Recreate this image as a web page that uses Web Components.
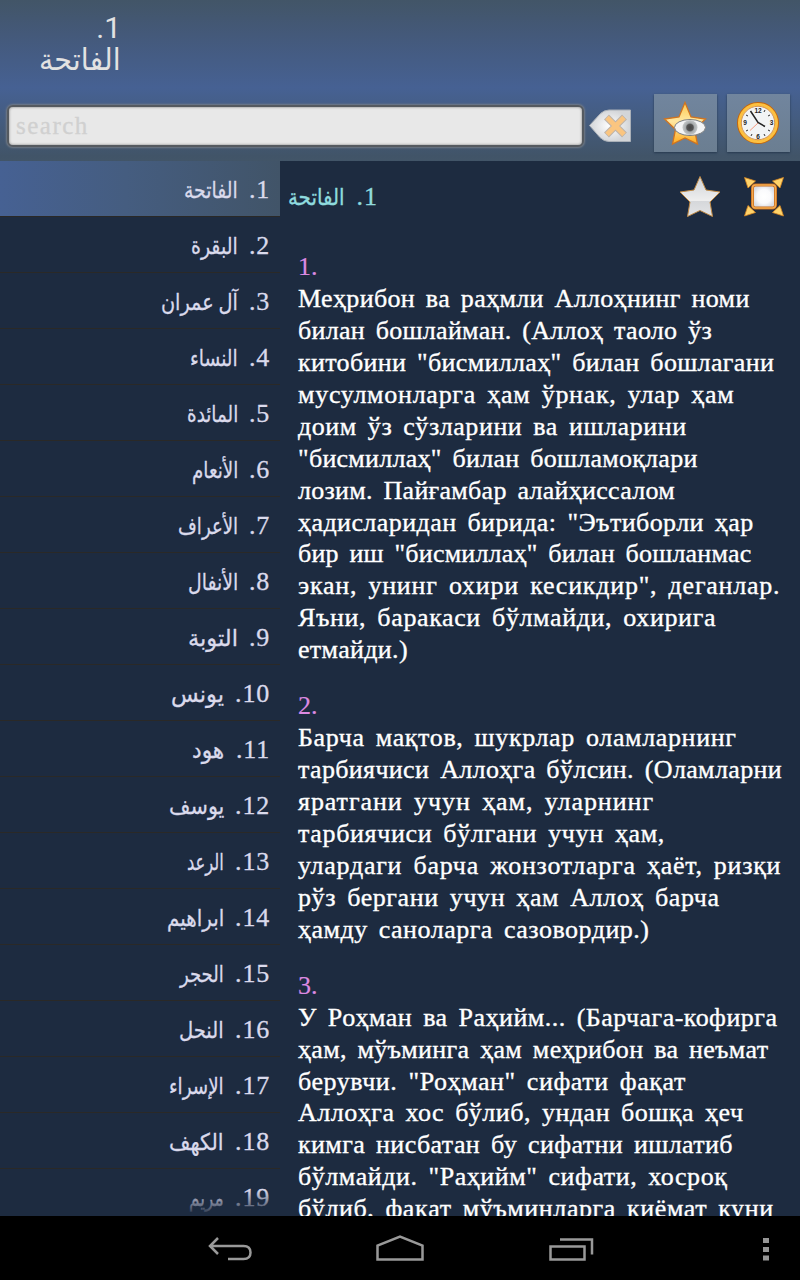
<!DOCTYPE html>
<html lang="uz">
<head>
<meta charset="utf-8">
<title>الفاتحة</title>
<style>
  html, body { margin: 0; height: 100%; overflow: hidden; background: #000; }
</style>
</head>
<body>
<quran-app></quran-app>

<script>
// [title, drawn width]
const CHAPTERS = [
  ['الفاتحة', 54], ['البقرة', 47], ['آل عمران', 77], ['النساء', 48],
  ['المائدة', 51], ['الأنعام', 46], ['الأعراف', 60], ['الأنفال', 50],
  ['التوبة', 50], ['يونس', 53], ['هود', 32], ['يوسف', 55],
  ['الرعد', 37], ['ابراهيم', 57], ['الحجر', 44], ['النحل', 45],
  ['الإسراء', 55], ['الكهف', 55], ['مريم', 35],
];

// Every line is [text, drawn width]
const VERSES = [
  [
    ['Меҳрибон ва раҳмли Аллоҳнинг номи', 452],
    ['билан бошлайман. (Аллоҳ таоло ўз', 414],
    ['китобини "бисмиллаҳ" билан бошлагани', 476],
    ['мусулмонларга ҳам ўрнак, улар ҳам', 437],
    ['доим ўз сўзларини ва ишларини', 389],
    ['"бисмиллаҳ" билан бошламоқлари', 400],
    ['лозим. Пайғамбар алайҳиссалом', 377],
    ['ҳадисларидан бирида: "Эътиборли ҳар', 456],
    ['бир иш "бисмиллаҳ" билан бошланмас', 453],
    ['экан, унинг охири кесикдир", деганлар.', 482],
    ['Яъни, баракаси бўлмайди, охирига', 418],
    ['етмайди.)', 110],
  ],
  [
    ['Барча мақтов, шукрлар оламларнинг', 439],
    ['тарбиячиси Аллоҳга бўлсин. (Оламларни', 484],
    ['яратгани учун ҳам, уларнинг', 356],
    ['тарбиячиси бўлгани учун ҳам,', 367],
    ['улардаги барча жонзотларга ҳаёт, ризқи', 483],
    ['рўз бергани учун ҳам Аллоҳ барча', 422],
    ['ҳамду саноларга сазовордир.)', 351],
  ],
  [
    ['У Роҳман ва Раҳийм... (Барчага-кофирга', 479],
    ['ҳам, мўъминга ҳам меҳрибон ва неъмат', 470],
    ['берувчи. "Роҳман" сифати фақат', 388],
    ['Аллоҳга хос бўлиб, ундан бошқа ҳеч', 445],
    ['кимга нисбатан бу сифатни ишлатиб', 435],
    ['бўлмайди. "Раҳийм" сифати, хосроқ', 429],
    ['бўлиб, фақат мўъминларга қиёмат куни', 476],
  ],
];

// Text that is fitted to the width given in its "width" attribute
class FitText extends HTMLElement {
  connectedCallback() {
    if (!this.shadowRoot) {
      this.attachShadow({ mode: 'open' });
      this.shadowRoot.innerHTML = /* HTML */ `
        <style>
          :host { display: inline-block; white-space: nowrap; }
          span { display: inline-block; transform-origin: 0 50%; }
          :host([arabic]) span { transform-origin: 100% 50%; }
        </style>
        <span><slot></slot></span>
      `;
    }
    this.fit();
  }

  fit() {
    const span = this.shadowRoot.querySelector('span');
    const width = Number(this.getAttribute('width'));
    const natural = span.offsetWidth;
    if (!width || !natural) return;
    if (this.hasAttribute('arabic')) {
      // Joined letters can't be spaced, so squeeze the word instead
      span.style.transform = `scaleX(${width / natural})`;
      return;
    }
    const count = this.textContent.length;
    span.style.letterSpacing = `${(width - natural) / count}px`;
  }
}

class AppHeader extends HTMLElement {
  constructor() {
    super();
    this.attachShadow({ mode: 'open' });
    this.shadowRoot.innerHTML = /* HTML */ `
      <style>
        :host {
          display: flex;
          flex-direction: column;
          box-sizing: border-box;
          height: 161px;
          background: linear-gradient(#425567 0, #44597a 35px, #466193 88px, #445c7f 120px, #415468 156px, #425568 161px);
        }
        .title {
          flex: none;
          width: 82px;
          height: 69px;
          padding: 12px 0 0 39px;
          direction: rtl;
          font: 30px/32px Roboto, "DejaVu Sans", sans-serif;
          color: #e2e2e2;
        }
        .bar { display: flex; flex: none; height: 60px; padding-top: 12px; align-items: flex-start; }
        .search {
          box-sizing: border-box;
          width: 577px;
          height: 42px;
          margin: 12px 4px 0 7px;
          padding: 0 7px;
          border: 2px solid #555a60;
          border-radius: 6px;
          background: #e8e8e8;
          box-shadow: inset 0 0 2px 1px #b5b5b5, 0 0 2px 1px #737b86;
          font: 25px/38px "Liberation Serif", serif;
          -webkit-text-stroke: .3px #d0d0d0;
          color: #d0d0d0;
        }
        .clear { margin-top: 15px; flex: none; }
        button {
          flex: none;
          width: 63px;
          height: 58px;
          margin: 1px 0 0 10px;
          padding: 0;
          border: 0;
          background: linear-gradient(#71859e, #6b7e91);
          box-shadow: 0 1px 2px #26384e;
        }
        button.first { margin-left: 22px; }
        svg { display: block; }
      </style>
      <div class="title"><div>1.</div><fit-text arabic width="82">الفاتحة</fit-text></div>
      <div class="bar">
        <div class="search"><fit-text width="73">search</fit-text></div>
        <svg class="clear" width="44" height="36" viewBox="0 0 44 36">
          <defs><radialGradient id="g"><stop offset="0" stop-color="#fff"/><stop offset="1" stop-color="#d3d5d8"/></radialGradient></defs>
          <path d="M1.500 17.500L12 6q4-4 9-4h21.500v31.500H21q-5 0-9-4z" fill="url(#g)" stroke="#aab0b8"/>
          <path d="M18.500 9L36.500 27M36.500 9L18.500 27" stroke="#bcb3ab" stroke-width="7"/>
          <path d="M19 9.500L36 26.500M36 9.500L19 26.500" stroke="#fac580" stroke-width="5"/>
        </svg>
        <button class="first">
          <svg width="63" height="58" viewBox="0 0 63 58">
            <defs><linearGradient id="s" x2="0" y2="1"><stop offset="0" stop-color="#ffc84e"/><stop offset=".45" stop-color="#ffe7a0"/><stop offset="1" stop-color="#ffad20"/></linearGradient>
            <radialGradient id="e"><stop offset="0" stop-color="#444"/><stop offset=".43" stop-color="#555"/><stop offset=".6" stop-color="#a6aaac"/><stop offset="1" stop-color="#c6c9ca"/></radialGradient></defs>
            <path d="M31 8.500l6 14.500 14.500 2-11 10.500 3 14.500-12.500-6-12.500 6 3-14.500-11-10.500 14.500-2z" fill="url(#s)" stroke="#cf7420" stroke-width="1.300"/>
            <ellipse cx="36" cy="33.500" rx="15.500" ry="8" fill="#f3f4f5" stroke="#7c7e80"/>
            <circle cx="36" cy="33.500" r="7.500" fill="url(#e)"/>
          </svg>
        </button>
        <button>
          <svg width="63" height="58" viewBox="0 0 63 58">
            <circle cx="31" cy="29" r="20" fill="#fff" stroke="#c76608" stroke-width="2"/>
            <circle cx="31" cy="29" r="18.500" fill="#f2f4f5" stroke="#fcc040" stroke-width="3"/>
            <circle cx="31" cy="29" r="16.700" fill="none" stroke="#c66b13" stroke-width=".7"/>
            <g font-family="Liberation Sans, sans-serif" font-size="6.500" font-weight="bold" fill="#222" text-anchor="middle">
              <text x="31" y="18.500">12</text><text x="44.500" y="31">3</text><text x="31" y="45">6</text><text x="18" y="31">9</text>
            </g>
            <path d="M38 16l-1 2M43 21l-2 1M43 37l-2-1M38 42l-1-2M24 42l1-2M19 37l2-1M19 21l2 1" stroke="#333"/>
            <path d="M31 29l-8 7.500" stroke="#f69a80"/>
            <path d="M23.500 17L31 28.500l7 4" fill="none" stroke="#222" stroke-width="1.500"/>
          </svg>
        </button>
      </div>
    `;
  }
}

class ChapterItem extends HTMLElement {
  connectedCallback() {
    this.attachShadow({ mode: 'open' });
    this.shadowRoot.innerHTML = /* HTML */ `
      <style>
        :host {
          display: block;
          box-sizing: border-box;
          height: 56px;
          padding: 1px 10px 0 0;
          direction: rtl;
          border-bottom: 1px solid #2a2927;
          font: 26px/56px "Liberation Serif", "DejaVu Sans", serif;
          -webkit-text-stroke: .3px #dadaec;
          color: #dadaec;
        }
        :host([selected]) { background: linear-gradient(90deg, #466193, #455d80 45%, #415468); }
        .num { display: inline-block; letter-spacing: .8px; width: 32px; }
        .num.wide { width: 46px; }
        fit-text { font-size: 23px; }
      </style>
      <span class="num ${this.getAttribute('num') > 9 ? 'wide' : ''}">${this.getAttribute('num')}. </span><fit-text
        arabic width="${this.getAttribute('width')}">${this.textContent}</fit-text>
    `;
  }
}

class ChapterList extends HTMLElement {
  connectedCallback() {
    this.attachShadow({ mode: 'open' });
    const items = CHAPTERS.map(
      ([name, width], i) =>
        `<chapter-item num="${i + 1}" width="${width}" ${i ? '' : 'selected'}>${name}</chapter-item>`
    );
    this.shadowRoot.innerHTML = /* HTML */ `
      <style>
        :host { display: block; position: relative; overflow: hidden; }
        /* Fades the last row out */
        .fade {
          position: absolute;
          inset: auto 0 0 0;
          height: 26px;
          background: linear-gradient(transparent, #1d2b40);
        }
      </style>
      ${items.join('')}
      <div class="fade"></div>
    `;
  }
}

class ReaderPane extends HTMLElement {
  connectedCallback() {
    this.attachShadow({ mode: 'open' });
    const verses = VERSES.map(
      (lines, i) => `<section><div class="num">${i + 1}.</div>${lines
        .map(([text, width]) => `<div><fit-text width="${width}">${text}</fit-text></div>`)
        .join('')}</section>`
    );
    this.shadowRoot.innerHTML = /* HTML */ `
      <style>
        :host {
          display: block;
          overflow: hidden;
          font: 26px/31.950px "Liberation Serif", serif;
          -webkit-text-stroke: .35px currentColor;
          color: #fff;
        }
        header { display: flex; align-items: center; height: 72px; padding: 0 15px 0 7px; }
        h1 {
          direction: rtl;
          margin: 0 auto 0 0;
          width: 91px;
          white-space: nowrap;
          font: 26px/32px "Liberation Serif", "DejaVu Sans", serif;
          color: #8fdbdf;
        }
        h1 span { display: inline-block; width: 33px; letter-spacing: 1px; }
        h1 fit-text { font-size: 23px; }
        .star { margin-right: 21px; }
        .verses { padding: 18px 0 0 18px; }
        .verses fit-text { word-spacing: 4px; }
        section { margin-bottom: 24px; }
        section div { height: 31.950px; }
        .num { color: #dc8ae2; -webkit-text-stroke: .2px #dc8ae2; }
      </style>
      <header>
        <h1><span>1. </span><fit-text arabic width="57">الفاتحة</fit-text></h1>
        <svg class="star" width="44" height="44" viewBox="0 0 44 44">
          <defs><linearGradient id="w" x2="0" y2="1"><stop offset="0" stop-color="#cfd2d6"/><stop offset=".6" stop-color="#eee"/><stop offset=".61" stop-color="#d5d7da"/><stop offset="1" stop-color="#e4e5e7"/></linearGradient></defs>
          <path d="M22 1.500l6 13.500 14 2-10 10 2.500 14.500-12.500-6-12.500 6L12 27 2 17l14-2z" fill="url(#w)" stroke="#c08a45"/>
        </svg>
        <svg width="42" height="42" viewBox="0 0 42 42">
          <defs><radialGradient id="f"><stop offset="0" stop-color="#fff"/><stop offset=".6" stop-color="#fafafc"/><stop offset="1" stop-color="#d9dce3"/></radialGradient></defs>
          <g fill="#ffd36a" stroke="#d48420" stroke-width=".8">
            <path d="M1.500 1.500l11 3.500-7.500 7zM40.500 1.500l-11 3.500 7.500 7zM1.500 40l11-3.500-7.500-7zM40.500 40l-11-3.500 7.500-7z"/>
          </g>
          <rect x="9.500" y="9" width="23" height="23" rx="3" fill="url(#f)" stroke="#c66d20" stroke-width="3"/>
          <rect x="9.500" y="9" width="23" height="23" rx="3" fill="none" stroke="#f5aa4e" stroke-width="1.500"/>
        </svg>
      </header>
      <div class="verses">${verses.join('')}</div>
    `;
  }
}

class SystemBar extends HTMLElement {
  constructor() {
    super();
    this.attachShadow({ mode: 'open' });
    this.shadowRoot.innerHTML = /* HTML */ `
      <style>
        :host {
          display: flex;
          align-items: center;
          box-sizing: border-box;
          height: 64px;
          padding: 3px 28px 1px 206px;
          background: #000;
        }
        svg { flex: none; fill: none; stroke: #999; stroke-width: 2.500; }
        .home { margin-left: 123px; }
        .recent { margin-left: 123px; }
        .menu { margin-left: auto; fill: #969696; stroke: none; }
      </style>
      <svg width="46" height="30" viewBox="0 0 46 30"><path d="M12 4L4 12l8 8M4 12h33.500q7 0 7 6.500T37.500 25H22"/></svg>
      <svg class="home" width="49" height="30" viewBox="0 0 49 30"><path d="M2.500 25.500V11.500L25 2.500 47.500 11.500v14z"/></svg>
      <svg class="recent" width="48" height="30" viewBox="0 0 48 30"><path d="M3.500 12.500h34v13h-34zM13 5.500h32v15"/></svg>
      <svg class="menu" width="12" height="30" viewBox="0 0 12 30"><path d="M3 4h6v5H3zM3 13h6v5H3zM3 21.500h6v5H3z"/></svg>
    `;
  }
}

class QuranApp extends HTMLElement {
  constructor() {
    super();
    this.attachShadow({ mode: 'open' });
    this.shadowRoot.innerHTML = /* HTML */ `
      <style>
        :host {
          display: grid;
          grid-template-rows: 161px 1fr 64px;
          width: 800px;
          height: 1280px;
          overflow: hidden;
        }
        main {
          display: grid;
          grid-template-columns: 280px 1fr;
          min-height: 0;
          overflow: hidden;
          background: #1d2b40;
        }
        chapter-list, reader-pane { height: 1055px; }
      </style>
      <app-header></app-header>
      <main>
        <chapter-list></chapter-list>
        <reader-pane></reader-pane>
      </main>
      <system-bar></system-bar>
    `;
  }
}

customElements.define('fit-text', FitText);
customElements.define('app-header', AppHeader);
customElements.define('chapter-item', ChapterItem);
customElements.define('chapter-list', ChapterList);
customElements.define('reader-pane', ReaderPane);
customElements.define('system-bar', SystemBar);
customElements.define('quran-app', QuranApp);
</script>
</body>
</html>
